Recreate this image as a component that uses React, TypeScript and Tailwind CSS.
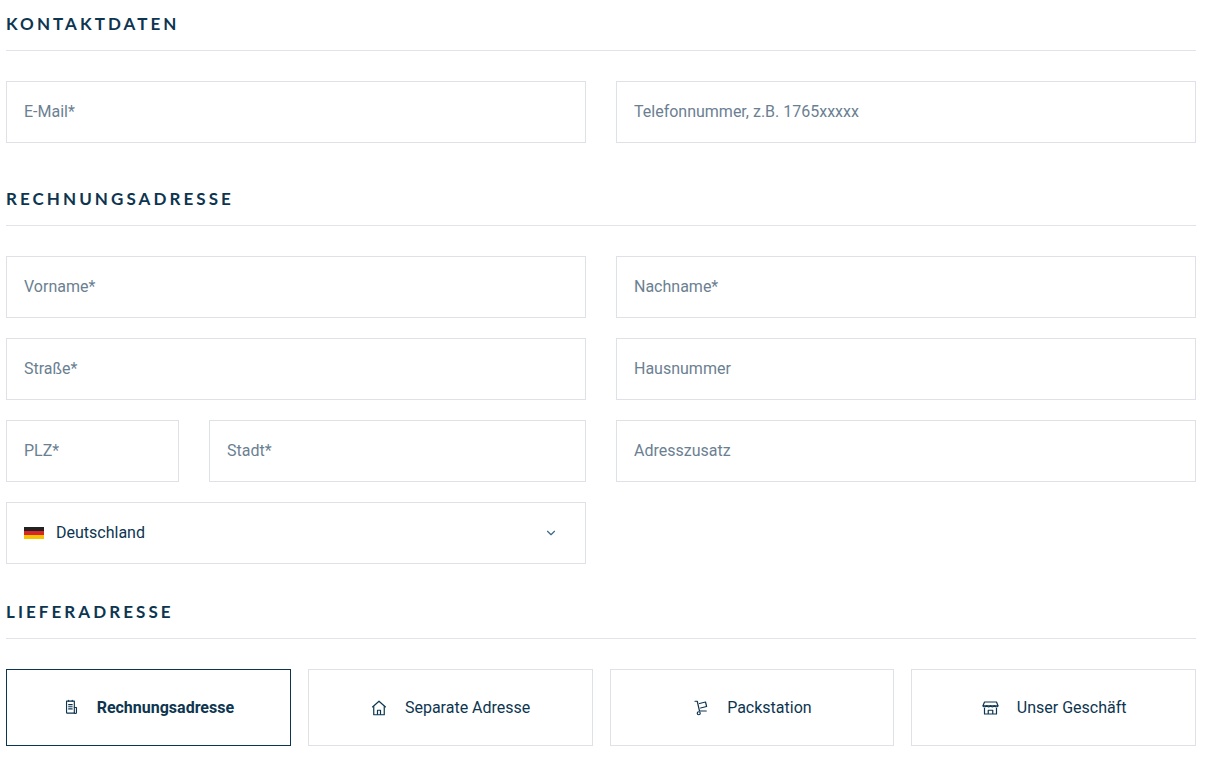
import { ChevronDown } from "lucide-react";

const font = { fontFamily: "Roboto, 'Noto Sans', sans-serif" };

function Heading({ children }: { children: string }) {
  return (
    <div className="border-b border-[#e1e3e8] pb-[16px]">
      <h2 className="text-[17px] font-bold leading-[20px] tracking-[0.18em] text-[#0d3550]" style={{ fontFamily: "Lato, sans-serif" }}>
        {children}
      </h2>
    </div>
  );
}

function Field({ label, className = "" }: { label: string; className?: string }) {
  return (
    <div className={`flex h-[62px] items-center border border-[#dfe1e6] px-[17px] text-[16px] text-[#6b7f92] ${className}`}>
      {label}
    </div>
  );
}

const ReceiptIcon = () => (
  <svg width="17" height="17" viewBox="0 0 24 24" fill="none" stroke="#0d3550" strokeWidth="1.6" strokeLinecap="round" strokeLinejoin="round">
    <path d="M5 3h11v17H6a1 1 0 0 1-1-1z" />
    <path d="M16 12h3v7a1.5 1.5 0 0 1-3 0" />
    <path d="M8 8h5M8 11h5M8 14h5" />
    <path d="M8 3v-1M13 3v-1" />
  </svg>
);
const HomeIcon = () => (
  <svg width="18" height="18" viewBox="0 0 24 24" fill="none" stroke="#0d3550" strokeWidth="1.6" strokeLinejoin="round">
    <path d="M3 11 12 3l9 8" />
    <path d="M5 9.5V21h14V9.5" />
    <path d="M10 21v-6h4v6" />
  </svg>
);
const CartIcon = () => (
  <svg width="18" height="18" viewBox="0 0 24 24" fill="none" stroke="#0d3550" strokeWidth="1.6" strokeLinecap="round" strokeLinejoin="round">
    <path d="M4 3h3l3 13h9" />
    <path d="M10 6l8-2 1.5 6-8 2" />
    <circle cx="9" cy="19" r="2" />
  </svg>
);
const StoreIcon = () => (
  <svg width="19" height="18" viewBox="0 0 24 24" fill="none" stroke="#0d3550" strokeWidth="1.6" strokeLinejoin="round">
    <path d="M4 4h16l2 5H2z" />
    <path d="M2 9c0 2 4 2 5 0 1 2 4 2 5 0 1 2 4 2 5 0 1 2 5 2 5 0" />
    <path d="M4 12v8h16v-8M9 20v-5h6v5" />
  </svg>
);

function Option({ icon, label, active }: { icon: React.ReactNode; label: string; active?: boolean }) {
  return (
    <div className={`flex h-[77px] items-center justify-center gap-[17px] border text-[16px] text-[#0d3550] ${active ? "border-[#0d3550] font-bold" : "border-[#dfe1e6]"}`}>
      {icon}
      <span>{label}</span>
    </div>
  );
}

export default function App() {
  return (
    <div className="min-h-[764px] bg-white px-[6px] pt-[14px]" style={font}>
      <div className="w-[1190px]">
        <Heading>KONTAKTDATEN</Heading>
        <div className="mt-[30px] grid grid-cols-2 gap-[30px]">
          <Field label="E-Mail*" />
          <Field label="Telefonnummer, z.B. 1765xxxxx" />
        </div>

        <div className="mt-[46px]">
          <Heading>RECHNUNGSADRESSE</Heading>
        </div>
        <div className="mt-[30px] grid grid-cols-2 gap-x-[30px] gap-y-[20px]">
          <Field label="Vorname*" />
          <Field label="Nachname*" />
          <Field label="Straße*" />
          <Field label="Hausnummer" />
          <div className="flex gap-[30px]">
            <Field label="PLZ*" className="w-[173px]" />
            <Field label="Stadt*" className="flex-1" />
          </div>
          <Field label="Adresszusatz" />
          <div className="flex h-[62px] items-center justify-between border border-[#dfe1e6] px-[17px] text-[16px] text-[#0d3550]">
            <div className="flex items-center gap-[12px]">
              <div className="flex h-[12px] w-[20px] flex-col">
                <div className="flex-1 bg-[#222]" />
                <div className="flex-1 bg-[#d9252a]" />
                <div className="flex-1 bg-[#f5c400]" />
              </div>
              <span>Deutschland</span>
            </div>
            <ChevronDown size={14} className="mr-[10px] text-[#3a6b8a]" />
          </div>
        </div>

        <div className="mt-[38px]">
          <Heading>LIEFERADRESSE</Heading>
        </div>
        <div className="mt-[30px] grid grid-cols-4 gap-[17px]">
          <Option icon={<ReceiptIcon />} label="Rechnungsadresse" active />
          <Option icon={<HomeIcon />} label="Separate Adresse" />
          <Option icon={<CartIcon />} label="Packstation" />
          <Option icon={<StoreIcon />} label="Unser Geschäft" />
        </div>
      </div>
    </div>
  );
}
